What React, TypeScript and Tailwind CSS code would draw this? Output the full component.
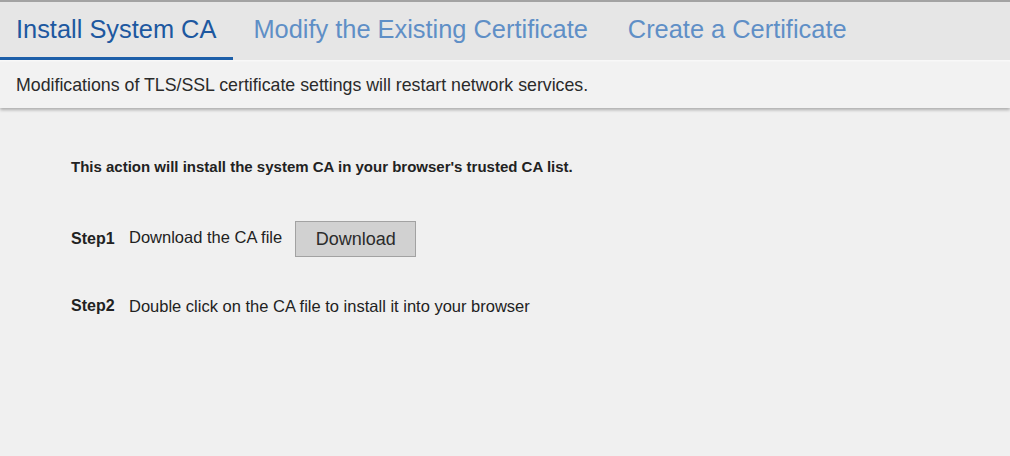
import React from 'react';

const tabs = [
  { id: 'install', label: 'Install System CA' },
  { id: 'modify', label: 'Modify the Existing Certificate' },
  { id: 'create', label: 'Create a Certificate' },
];

export default function App() {
  const active = 'install';

  return (
    <div
      className="min-h-[456px] w-full bg-[#f0f0f0] text-[#222]"
      style={{ fontFamily: '"Liberation Sans", Arial, sans-serif' }}
    >
      {/* Tab bar */}
      <div className="border-t-2 border-[#a3a3a3] bg-[#e6e6e6]">
        <div className="flex border-b-2 border-[#f8f8f8]">
          {tabs.map((tab, i) => (
            <div
              key={tab.id}
              className={`flex h-[58px] items-center border-b-[3px] text-[25.4px] leading-none ${
                i === 0 ? 'pl-4 pr-[17px]' : 'px-5'
              } ${
                tab.id === active
                  ? 'border-[#1d5fa9] text-[#1d58a0]'
                  : 'border-transparent text-[#5f8fc6]'
              }`}
            >
              {tab.label}
            </div>
          ))}
        </div>
      </div>

      {/* Notice */}
      <div className="flex h-[46px] items-center bg-[#f2f2f2] px-4 text-[17.75px] text-[#2a2a2a] shadow-[0_2px_3px_rgba(0,0,0,0.28)]">
        Modifications of TLS/SSL certificate settings will restart network services.
      </div>

      {/* Body */}
      <div className="px-[71px] pt-[50px] text-[16.5px]">
        <p className="text-[15px] font-bold leading-[18px]">
          This action will install the system CA in your browser's trusted CA list.
        </p>

        <div className="mt-[45px] flex items-center">
          <span className="w-[58px] text-[16px] font-bold">Step1</span>
          <span className="-mt-[4px]">Download the CA file</span>
          <button className="ml-[13px] h-[36px] w-[121px] border border-[#a2a2a2] bg-[#d1d1d1] text-[18px] text-[#2b2b2b]">
            Download
          </button>
        </div>

        <div className="mt-[37px] flex items-center">
          <span className="w-[58px] text-[16px] font-bold">Step2</span>
          <span>Double click on the CA file to install it into your browser</span>
        </div>
      </div>
    </div>
  );
}
